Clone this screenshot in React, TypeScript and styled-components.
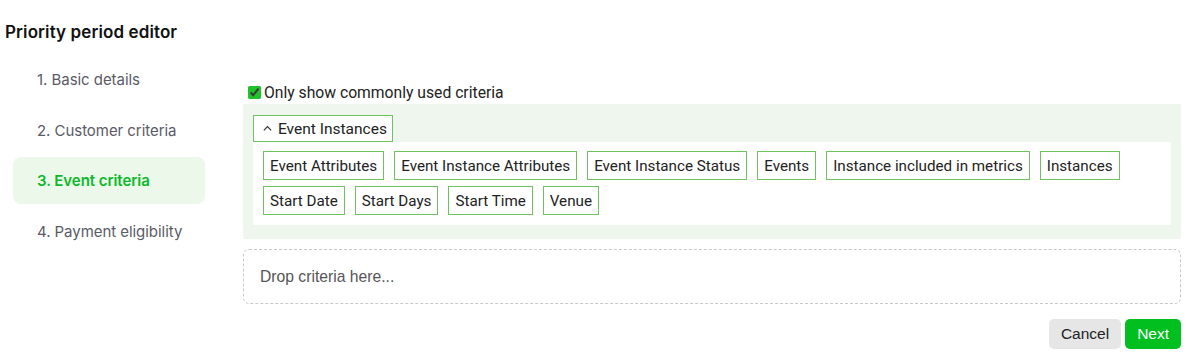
import { useState } from "react";
import styled, { createGlobalStyle } from "styled-components";

const GlobalStyle = createGlobalStyle`
  html, body {
    margin: 0;
    padding: 0;
    background: #fff;
  }
  body {
    font-family: Roboto, "Liberation Sans", Arial, sans-serif;
    color: #333;
  }
`

const Page = styled.div`
  padding: 22px 12px 0 5px;
  box-sizing: border-box;
`

const Title = styled.h1`
  margin: 0;
  font-family: Inter, "Noto Sans", sans-serif;
  font-size: 17px;
  font-weight: 600;
  line-height: 20px;
  color: #111;
  letter-spacing: 0.1px;
`

const Layout = styled.div`
  display: flex;
  gap: 38px;
  margin-top: 14px;
`

const Steps = styled.ul`
  list-style: none;
  margin: 0 0 0 8px;
  padding: 0;
  width: 192px;
  flex: none;
  display: flex;
  flex-direction: column;
  gap: 3.6px;
`

const Step = styled.li<{ $active?: boolean }>`
  height: 47px;
  display: flex;
  align-items: center;
  padding: 0 0 0 24px;
  white-space: nowrap;
  border-radius: 8px;
  font-family: Inter, "Noto Sans", sans-serif;
  font-size: 15px;
  letter-spacing: -0.05px;
  color: ${(p) => (p.$active ? "#0cb82a" : "#5b5b66")};
  font-weight: ${(p) => (p.$active ? 600 : 400)};
  background: ${(p) => (p.$active ? "#ecf8ea" : "transparent")};
`

const Main = styled.div`
  flex: 1;
  margin-top: 27px;
  min-width: 0;
`

const CheckRow = styled.label`
  display: flex;
  align-items: center;
  height: 18px;
  font-size: 15.7px;
  color: #222;
  margin-bottom: 3px;
  input {
    margin: 0 3px 0 5px;
    width: 13px;
    height: 13px;
    accent-color: #1fc22b;
  }
`

const Panel = styled.div`
  background: #eff6ed;
  padding: 11px 10px 14px;
`

const GroupHeader = styled.button`
  display: inline-flex;
  align-items: center;
  gap: 5px;
  height: 27px;
  padding: 0 5px 0 8px;
  box-sizing: border-box;
  border: 1px solid #6fc260;
  background: #fff;
  font-family: Roboto, "Liberation Sans", sans-serif;
  font-size: 15.5px;
  color: #222;
  cursor: pointer;
`

const Chevron = styled.svg`
  width: 11px;
  height: 11px;
`

const ChipArea = styled.div`
  background: #fff;
  padding: 9px 10px 10px;
  display: flex;
  flex-wrap: wrap;
  gap: 6px 10px;
`

const Chip = styled.span`
  display: inline-flex;
  align-items: center;
  height: 29px;
  padding: 0 6px;
  box-sizing: border-box;
  border: 1px solid #6fc260;
  font-size: 15.2px;
  color: #222;
  cursor: grab;
`

const DropZone = styled.div`
  margin-top: 10px;
  height: 55px;
  box-sizing: border-box;
  border: 1px dashed #c8c8c8;
  border-radius: 6px;
  display: flex;
  align-items: center;
  padding: 0 16px;
  font-family: "Liberation Sans", Arial, sans-serif;
  font-size: 15.7px;
  color: #555;
`

const Actions = styled.div`
  display: flex;
  justify-content: flex-end;
  gap: 4px;
  margin-top: 15px;
`

const Button = styled.button<{ $primary?: boolean }>`
  height: 30px;
  border: 0;
  border-radius: 5px;
  padding: 0 12px;
  font-family: "Liberation Sans", Arial, sans-serif;
  font-size: 15.5px;
  background: ${(p) => (p.$primary ? "#00bf1f" : "#e6e6e6")};
  color: ${(p) => (p.$primary ? "#fff" : "#222")};
  cursor: pointer;
`

const steps = ["1. Basic details", "2. Customer criteria", "3. Event criteria", "4. Payment eligibility"]

const criteria = [
  "Event Attributes",
  "Event Instance Attributes",
  "Event Instance Status",
  "Events",
  "Instance included in metrics",
  "Instances",
  "Start Date",
  "Start Days",
  "Start Time",
  "Venue",
]

export default function App() {
  const [common, setCommon] = useState(true)
  const [open, setOpen] = useState(true)

  return (
    <Page>
      <GlobalStyle />
      <Title>Priority period editor</Title>
      <Layout>
        <Steps>
          {steps.map((s, i) => (
            <Step key={s} $active={i === 2}>{s}</Step>
          ))}
        </Steps>
        <Main>
          <CheckRow>
            <input type="checkbox" checked={common} onChange={() => setCommon(!common)} />
            Only show commonly used criteria
          </CheckRow>
          <Panel>
            <GroupHeader onClick={() => setOpen(!open)}>
              <Chevron viewBox="0 0 12 12" fill="none" stroke="#333" strokeWidth="1.3" style={{ transform: open ? "none" : "rotate(180deg)" }}>
                <path d="M2 8 L6 4 L10 8" />
              </Chevron>
              Event Instances
            </GroupHeader>
            {open && (
              <ChipArea>
                {criteria.map((c) => (
                  <Chip key={c} draggable>{c}</Chip>
                ))}
              </ChipArea>
            )}
          </Panel>
          <DropZone>Drop criteria here...</DropZone>
          <Actions>
            <Button>Cancel</Button>
            <Button $primary>Next</Button>
          </Actions>
        </Main>
      </Layout>
    </Page>
  )
}
